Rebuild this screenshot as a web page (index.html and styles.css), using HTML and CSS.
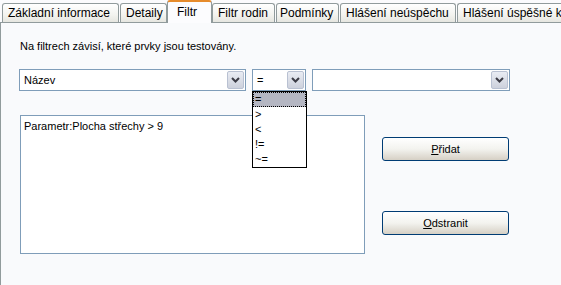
FILE: index.html
```
<!DOCTYPE html>
<html lang="cs">
<head>
<meta charset="utf-8">
<link rel="stylesheet" href="styles.css">
</head>
<body>
<div class="tabs">
  <div class="tab t1">Základní informace</div>
  <div class="tab t2">Detaily</div>
  <div class="tab active">Filtr</div>
  <div class="tab t4">Filtr rodin</div>
  <div class="tab t5">Podmínky</div>
  <div class="tab t6">Hlášení neúspěchu</div>
  <div class="tab t7">Hlášení úspěšné k</div>
</div>
<div class="panel">
  <p class="intro">Na filtrech závisí, které prvky jsou testovány.</p>
  <div class="combos">
    <div class="combo c1"><span class="val">Název</span><span class="arrow"><svg width="9" height="6" viewBox="0 0 9 6"><path d="M1 1 L4.5 4.5 L8 1" fill="none" stroke="#3c3c46" stroke-width="2"/></svg></span></div>
    <div class="combo c2"><span class="val">=</span><span class="arrow"><svg width="9" height="6" viewBox="0 0 9 6"><path d="M1 1 L4.5 4.5 L8 1" fill="none" stroke="#3c3c46" stroke-width="2"/></svg></span>
      <ul class="dropdown">
        <li class="sel">=</li>
        <li>&gt;</li>
        <li>&lt;</li>
        <li>!=</li>
        <li>~=</li>
      </ul>
    </div>
    <div class="combo c3"><span class="val"></span><span class="arrow"><svg width="9" height="6" viewBox="0 0 9 6"><path d="M1 1 L4.5 4.5 L8 1" fill="none" stroke="#3c3c46" stroke-width="2"/></svg></span></div>
  </div>
  <div class="lower">
    <div class="listbox"><div class="item">Parametr:Plocha střechy &gt; 9</div></div>
    <div class="buttons">
      <button class="btn"><u>P</u>řidat</button>
      <button class="btn"><u>O</u>dstranit</button>
    </div>
  </div>
</div>
</body>
</html>
```
FILE: styles.css
```
* { box-sizing: border-box; }
html, body { margin: 0; padding: 0; }
body {
  width: 561px; height: 285px; overflow: hidden;
  background: #fbfbfd;
  font-family: "Liberation Sans", Arial, sans-serif;
  font-size: 11px; color: #000;
}
.tabs {
  display: flex; align-items: flex-end;
  height: 23px; padding-left: 2px;
  position: relative; z-index: 2;
  white-space: nowrap;
}
.tab {
  height: 19px; margin-bottom: 1px;
  border: 1px solid #919b9c; border-bottom: none;
  border-radius: 3px 3px 0 0;
  background: linear-gradient(#ffffff, #f3f3ef 60%, #e6e6e0);
  font-size: 12px; line-height: 18px;
  padding-left: 5px; overflow: hidden;
  flex: none;
}
.t1 { width: 117px; margin-right: 1px; }
.t2 { width: 47px; }
.active {
  width: 45px; height: 23px; margin-bottom: 0;
  border-top: 2px solid #e68b2c;
  background: #fcfcfe;
  line-height: 20px; padding-left: 9px;
}
.t4 { width: 63px; margin-right: 1px; }
.t5 { width: 63px; margin-right: 1px; padding-left: 3px; }
.t6 { width: 116px; margin-right: 1px; }
.t7 { width: 104px; border-right: none; border-top-right-radius: 0; }
.panel {
  border-top: 1px solid #919b9c;
  border-left: 1px solid #919b9c;
  margin-top: -1px;
  height: 263px;
  padding-left: 18px;
  background: #f9fafc;
}
.intro { margin: 17px 0 0 1px; line-height: 13px; }
.combos { display: flex; margin-top: 16px; height: 22px; }
.combo {
  position: relative;
  display: flex; align-items: center; justify-content: space-between;
  height: 22px; background: #fff;
  border: 1px solid #7f9db9;
  padding: 1px 1px 1px 4px;
}
.val { line-height: 14px; }
.c1 { width: 227px; margin-right: 6px; }
.c2 { width: 54px; margin-right: 6px; }
.c3 { width: 198px; }
.arrow {
  width: 17px; height: 18px;
  border: 1px solid #b9c1d2; border-radius: 2px;
  background: linear-gradient(#e9ecf3, #cdd1dc);
  display: flex; align-items: center; justify-content: center;
}
.dropdown {
  position: absolute; left: -1px; top: 21px;
  width: 55px; height: 77px;
  margin: 0; padding: 0; list-style: none;
  background: #fff; border: 1px solid #000;
  z-index: 5;
}
.dropdown li { height: 15px; line-height: 15px; padding-left: 2px; }
.dropdown li.sel { background: #b4b6c2; outline: 1px dotted #000; outline-offset: -1px; }
.lower { display: flex; margin-top: 24px; }
.listbox {
  width: 345px; height: 139px; margin-left: 1px;
  background: #fff; border: 1px solid #7f9db9;
  padding: 4px 3px;
}
.item { line-height: 13px; }
.buttons {
  display: flex; flex-direction: column;
  margin-left: 17px; padding-top: 22px; gap: 50px;
}
.btn {
  width: 127px; height: 24px;
  font-family: inherit; font-size: 11px; color: #000;
  border: 1px solid #003c74; border-radius: 3px;
  background: linear-gradient(#ffffff, #f3f3ef 50%, #d6d0c5);
  padding: 0;
}
.btn u { text-decoration: underline; }
```
